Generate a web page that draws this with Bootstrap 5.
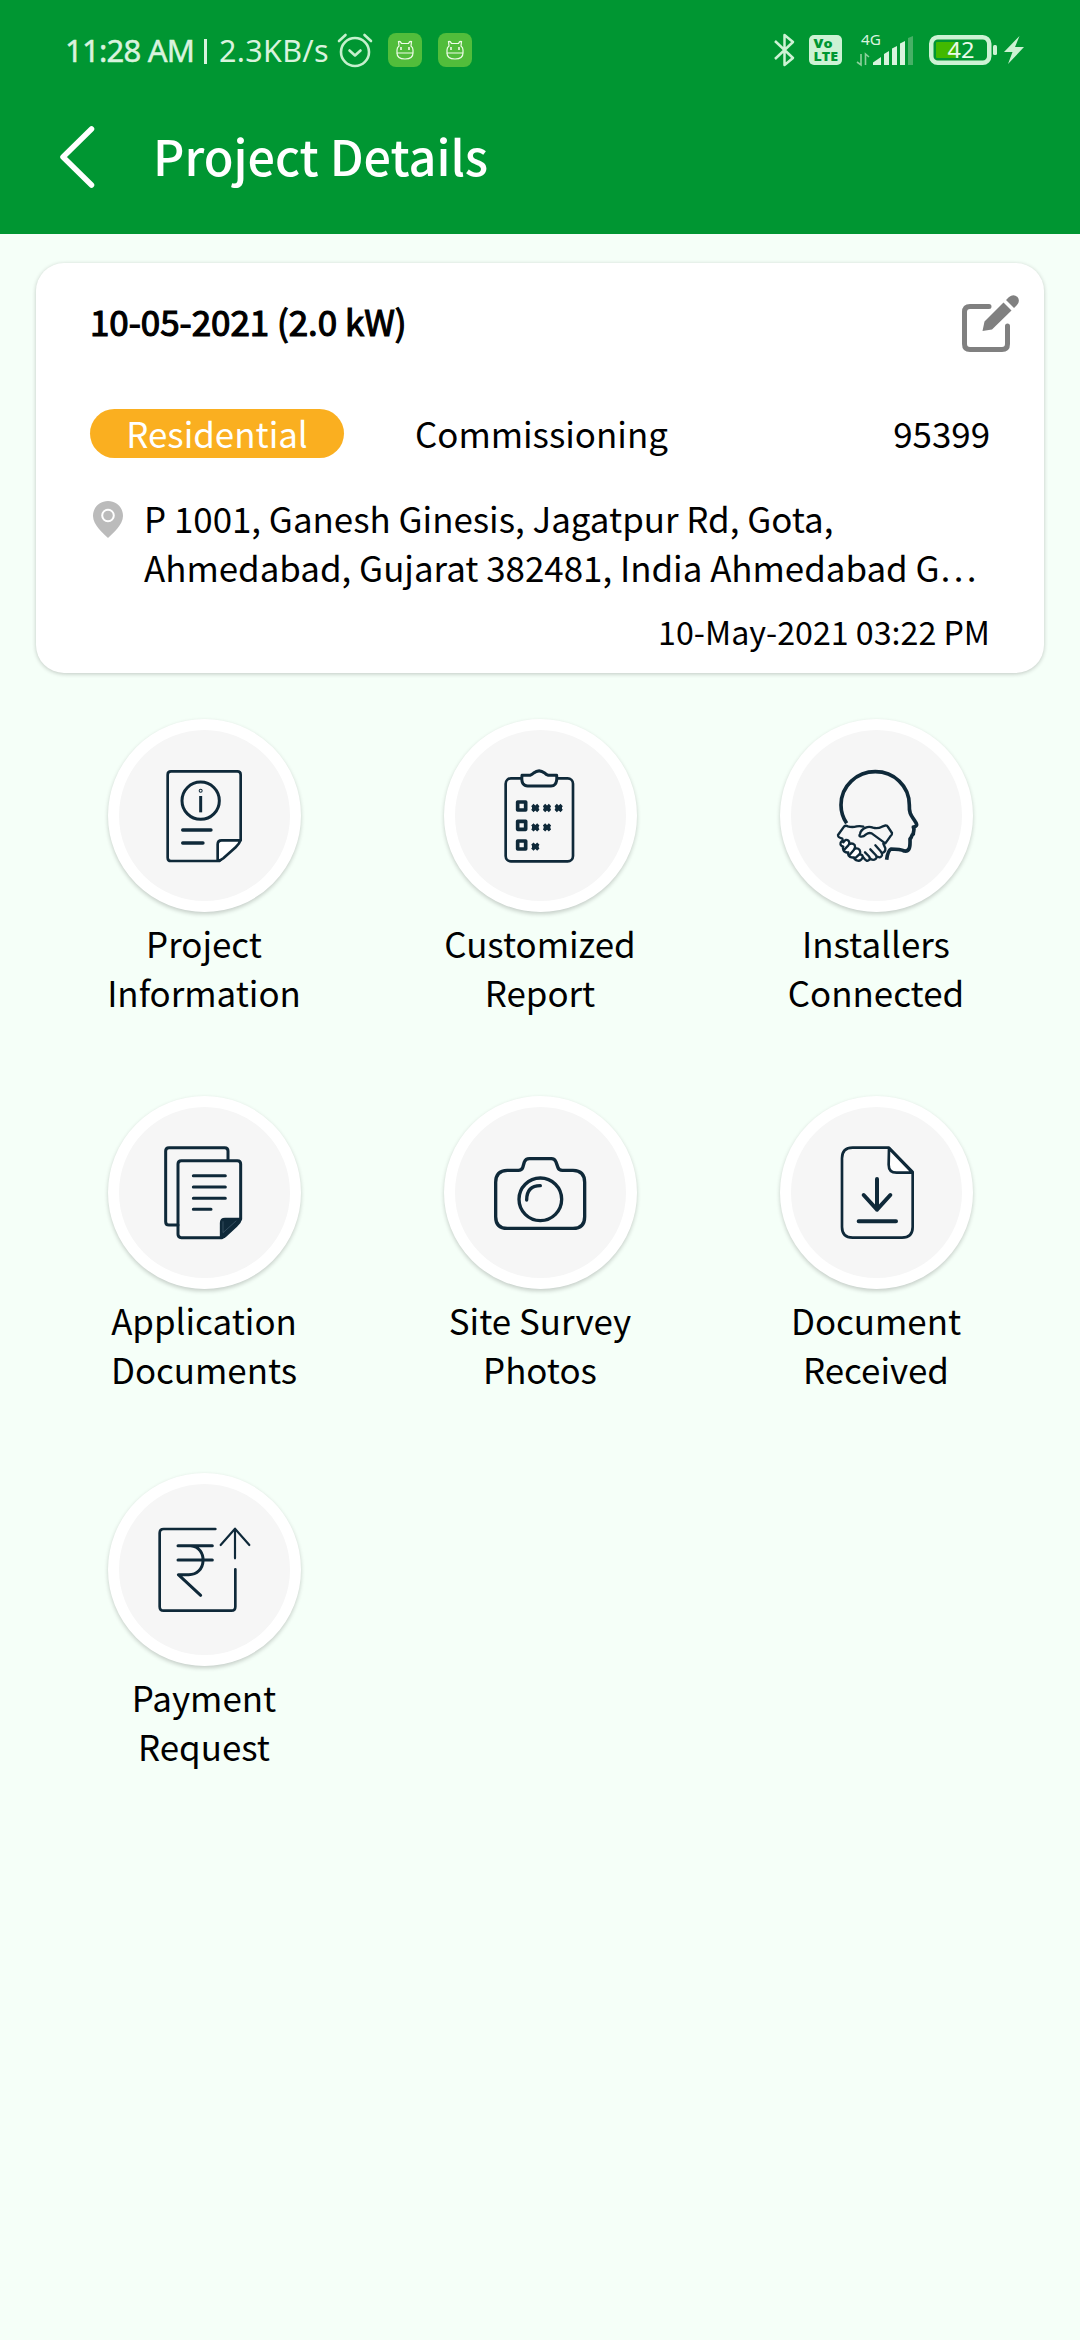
<!DOCTYPE html>
<html lang="en">
<head>
<meta charset="utf-8">
<meta name="viewport" content="width=device-width, initial-scale=1">
<title>Project Details</title>
<link href="https://cdn.jsdelivr.net/npm/bootstrap@5.3.0/dist/css/bootstrap.min.css" rel="stylesheet">
<style>
  body { background: #f5fff8; color: #000; font-family: "Noto Sans CJK SC", "Noto Sans", sans-serif; font-size: 34.9px; line-height: 49px; min-height: 2340px; }
  svg { display: block; flex: none; overflow: visible; }
  .topbar { background: #009632; height: 234px; color: #fff; }
  .statusbar { height: 100px; padding: 0 56px 0 65px; font-family: "Noto Sans", sans-serif; color: #d9f3de; line-height: 40px; }
  .clock { font-size: 31px; width: 132px; letter-spacing: -.75px; -webkit-text-stroke: .5px #d9f3de; }
  .speed { font-size: 30.5px; width: 115px; letter-spacing: .3px; }
  .divider { width: 3px; height: 25px; background: #d9f3de; margin: 3px 12px 0 7px; }
  .appbar { height: 114px; padding-left: 60px; gap: 59px; }
  .appbar h1 { font-size: 48.5px; line-height: 60px; font-weight: 500; margin: -4px 0 0; }
  .project { margin: 29px 36px 0; height: 410px; border: 0; border-radius: 28px; box-shadow: 0 1px 4px rgba(0,0,0,.22); color: #000; padding: 25px 25px 0 54px; }
  .project-name { font-weight: 400; font-size: 34.9px; line-height: 49px; margin: 9px 0 0 0; -webkit-text-stroke: 1.2px #000; }
  .kind { width: 254px; height: 49px; line-height: 49px; padding: 0; background: #faaf20; font-size: inherit; font-weight: 400; margin-right: 71px; }
  .status-row { margin: 57px 29px 0 0; line-height: 49px; }
  .address-row { margin: 36px 29px 0 3px; gap: 21px; }
  .stamp { font-size: 32.2px; margin: 15px 29px 0 0; }
  .tiles { margin: 46px 36px 0; row-gap: 79px; }
  .tile-disc { width: 193px; height: 193px; border: 11px solid #fff; background: #f6f6f6; box-shadow: 0 2px 4px rgba(0,0,0,.2); margin-bottom: 7px; }
  .tile-disc svg { width: 171px; height: 171px; fill: none; stroke: #0f2939; stroke-width: 9; stroke-linecap: round; stroke-linejoin: round; }
</style>
</head>
<body>
<header class="topbar">
  <div class="statusbar d-flex align-items-center">
    <span class="clock text-nowrap">11:28 AM</span><span class="divider"></span><span class="speed text-nowrap">2.3KB/s</span>
    <svg style="margin-left:3px" width="36" height="36" viewBox="0 0 36 36" fill="none" stroke="#c5f0cd" stroke-width="2.6" stroke-linecap="round" stroke-linejoin="round"><circle cx="18" cy="20" r="14"/><path d="M12.500 18.500 18 23.500 23.500 18.500M2 9 8.500 3M34 9 27.500 3"/></svg>
    <svg style="margin-left:15px" width="34" height="34" viewBox="0 0 34 34"><use href="#cat"/></svg>
    <svg style="margin-left:16px" width="34" height="34" viewBox="0 0 34 34">
      <g id="cat"><rect width="34" height="34" rx="8" fill="#51bd3b"/><g fill="none" stroke="#effbe9" stroke-width="1.200"><path d="M9 21V17Q9 14.500 11 13L10.500 8.500Q12.500 8 13.500 10.500H20.500Q21.500 8 23.500 8.500L23 13Q25 14.500 25 17V20Q25 26 17 26 9 26 9 20H25"/></g><path d="M13 14v3M21 14v3" stroke="#effbe9" stroke-width="1.600"/></g>
    </svg>
    <svg class="ms-auto" width="21" height="36" viewBox="0 0 21 36" fill="none" stroke="#cdf2d4" stroke-width="2.500" stroke-linejoin="round"><path d="M1 9 19 26 10.500 33V3L19 10 1 27"/></svg>
    <svg style="margin-left:14px" width="33" height="30" viewBox="0 0 33 30"><rect width="33" height="30" rx="5" fill="#cdf2d4"/><g fill="#009632" font-family="Open Sans" font-weight="800" font-size="12.500"><text x="4.500" y="12.500" textLength="19" lengthAdjust="spacingAndGlyphs">Vo</text><text x="4.500" y="25.500" textLength="24.500" lengthAdjust="spacingAndGlyphs">LTE</text></g></svg>
    <svg style="margin-left:15px" width="56" height="34" viewBox="0 0 56 34"><text x="4" y="12" font-family="Noto Sans" font-size="14.500" textLength="20" lengthAdjust="spacingAndGlyphs" fill="#d9f3de">4G</text><path d="M0 29 4 32V21M12 24 8.500 21V32" stroke="#8cd09c" stroke-width="1.600" fill="none"/><g fill="#d9f3de"><path d="M16 32V29.500L24 24V32ZM27 32V21L32 18V32ZM35 32V15.500L40 13V32ZM43 32V10.500L48 8V32Z"/><path d="M51 32V5L56 3V32Z" fill="#47b066"/></g></svg>
    <svg style="margin-left:16px" width="69" height="30" viewBox="0 0 69 30"><rect x="2.250" y="2.250" width="58" height="25.500" rx="6.500" fill="none" stroke="#cdf2d4" stroke-width="4.500"/><rect x="7" y="7" width="21" height="16" rx="1" fill="#42b900"/><rect x="64" y="10" width="4" height="10" rx="1.500" fill="#cdf2d4"/><text x="18.500" y="22.500" font-family="Noto Sans" font-size="21" textLength="27" lengthAdjust="spacingAndGlyphs" fill="#eafbea">42</text></svg>
    <svg style="margin-left:6px" width="20" height="30" viewBox="0 0 20 30"><path d="M15.500 1 0 17H8.500L4 29 20 12H11Z" fill="#cdf2d4"/></svg>
  </div>
  <div class="appbar d-flex align-items-center">
    <svg width="34" height="62" viewBox="0 0 34 62" fill="none" stroke="#fff" stroke-width="5.500" stroke-linecap="round" stroke-linejoin="round"><path d="M31.500 3 3 31 31.500 59"/></svg>
    <h1>Project Details</h1>
  </div>
</header>
<main>
  <section class="card project">
    <div class="d-flex justify-content-between align-items-start">
      <h2 class="project-name">10-05-2021 (2.0 kW)</h2>
      <svg style="margin-top:7px" width="57" height="57" viewBox="0 0 57 57"><path d="M27 11.500H8Q2.500 11.500 2.500 17V49Q2.500 54.500 8 54.500H40Q45.500 54.500 45.500 49V31" fill="none" stroke="#808080" stroke-width="5" stroke-linecap="round"/><path d="M20.500 36 22.500 26.500 41.500 7.500 49.500 15.500 30 34.500ZM44 5 47 2Q51.500-1.500 55.500 2 58.500 6 55 10L52 13Z" fill="#808080"/></svg>
    </div>
    <div class="status-row d-flex align-items-center">
      <span class="badge rounded-pill kind">Residential</span><span>Commissioning</span><span class="ms-auto">95399</span>
    </div>
    <div class="address-row d-flex align-items-start">
      <svg style="margin-top:7px" width="30" height="37" viewBox="0 0 30 37"><path d="M15 0C6.500 0 0 6.500 0 15 0 24 10 32 15 37 20 32 30 24 30 15 30 6.500 23.500 0 15 0Z" fill="#bbb"/><circle cx="15" cy="14.500" r="5.800" fill="none" stroke="#fff" stroke-width="2"/></svg>
      <div class="text-nowrap">P 1001, Ganesh Ginesis, Jagatpur Rd, Gota,<br>Ahmedabad, Gujarat 382481, India Ahmedabad G…</div>
    </div>
    <div class="stamp text-end">10-May-2021 03:22 PM</div>
  </section>

  <section class="row g-0 tiles text-center">
    <div class="col-4 d-flex flex-column align-items-center">
      <div class="tile-disc rounded-circle"><svg viewBox="85 61 513 513"><path d="M241 185H440Q450 185 450 195V392L386 454H241Q231 454 231 444V195Q231 185 241 185Z" stroke-width="8"/><path d="M381 453V404Q381 392 393 392H449Q447 402 435 413L398 446Q388 454 381 453Z" fill="#fff" stroke-width="8"/><circle cx="330" cy="273" r="56"/><path d="M330 259V308" stroke-linecap="butt"/><circle cx="330" cy="243" r="1.500"/><path d="M276 361H361M276 400H337" stroke-width="10"/></svg></div>
      <div>Project<br>Information</div>
    </div>
    <div class="col-4 d-flex flex-column align-items-center">
      <div class="tile-disc rounded-circle"><svg viewBox="73 61 513 513"><rect x="225" y="206" width="202" height="249" rx="16" stroke-width="8"/><path d="M274 197H298Q305 194 309 190 325 177 342 190 346 195 353 197H378Q380 216 373 224 369 229 361 229H291Q282 229 277 222 272 214 274 197Z" fill="#f6f6f6"/><g stroke-width="11"><rect x="261" y="277" width="24" height="24"/><rect x="261" y="335" width="24" height="24"/><rect x="261" y="394" width="24" height="24"/></g><path stroke-width="10" stroke-linecap="butt" d="M305 286 323 304M323 286 305 304M340 286 358 304M358 286 340 304M375 286 393 304M393 286 375 304M305 344 323 362M323 344 305 362M340 344 358 362M358 344 340 362M305 402 323 420M323 402 305 420"/><path stroke="none" fill="#0f2939" d="M304 289h20v13h-20zM339 289h20v13h-20zM374 289h20v13h-20zM304 347h20v13h-20zM339 347h20v13h-20zM304 405h20v13h-20z"/></svg></div>
      <div>Customized<br>Report</div>
    </div>
    <div class="col-4 d-flex flex-column align-items-center">
      <div class="tile-disc rounded-circle"><svg viewBox="90 61 513 513"><path stroke-width="11" stroke-linecap="butt" d="M257 341C244 322 240 306 240 286 240 228 288 186 343 186 398 186 445 228 445 286 444 315 452 318 464 338 470 347 466 351 457 352 462 361 456 366 457 373 450 376 454 382 447 388 448 412 446 426 430 424 418 418 402 418 390 418 380 424 379 436 377 450"/>
      <g stroke-width="7"><path d="M246 395 244 387Q230 383 231 376L249 351Q254 346 260 350 274 354 287 350 298 348 307 351"/><path d="M297 373Q299 361 314 354 324 349 336 354 350 358 363 351L374 347Q379 347 381 352L393 370Q394 376 388 380L373 401 332 371Q323 368 315 374 306 383 297 380Q294 378 297 373Z"/><path d="M247 398Q255 386 262 393 267 398 264 404 274 398 281 406 284 412 280 418 290 413 296 421 300 428 296 434 306 434 305 443 300 455 290 453 280 451 279 443 267 445 263 438 260 432 262 428 251 430 247 421 244 415 247 411 236 408 239 399 244 390 247 398Z" fill="#fff"/><path d="M262 407 249 421M279 420 265 437M295 434 281 447M307 443Q317 459 325 450 329 446 323 439L312 428M326 445Q335 455 345 447 349 443 344 436L328 419M346 440Q359 447 363 437 365 431 359 425L343 407M362 430Q374 428 373 416L367 402"/></g></svg></div>
      <div>Installers<br>Connected</div>
    </div>
    <div class="col-4 d-flex flex-column align-items-center">
      <div class="tile-disc rounded-circle"><svg viewBox="85 68 513 513"><path d="M262 422H235Q225 422 225 412V200Q225 190 235 190H402Q412 190 412 200V228"/><path d="M272 229H440Q450 229 450 239V404L394 460H272Q262 460 262 450V239Q262 229 272 229Z"/><path d="M392 459V416Q392 405 403 405H449Q447 415 437 423L407 451Q400 459 392 459Z" fill="#0f2939"/><path d="M308 274H404M308 308H404M308 342H404M308 375H361"/><path d="M397 412V445L436 410" stroke="#597083" stroke-width="1.500"/></svg></div>
      <div>Application<br>Documents</div>
    </div>
    <div class="col-4 d-flex flex-column align-items-center">
      <div class="tile-disc rounded-circle"><svg viewBox="73 68 513 513"><path stroke-width="10" d="M230 258H263Q273 258 276 250L281 233Q285 223 296 223H362Q372 223 376 233L382 250Q385 258 395 258H427Q462 259 462 294V397Q462 432 427 432H230Q195 432 195 397V294Q195 259 230 258Z"/><circle cx="329" cy="345" r="64" stroke-width="10"/><path d="M288 347Q288 304 329 304" stroke-width="10"/></svg></div>
      <div>Site Survey<br>Photos</div>
    </div>
    <div class="col-4 d-flex flex-column align-items-center">
      <div class="tile-disc rounded-circle"><svg viewBox="90 68 513 513"><path stroke-width="8" d="M275 190H384L455 263V428Q455 460 423 460H275Q243 460 243 428V222Q243 190 275 190Z"/><path stroke-width="8" fill="#fff" d="M384 192 454 265H407Q383 265 383 241Z"/><path stroke-width="12" d="M348 284V376M308 332 348 376 388 332M293 411H405"/></svg></div>
      <div>Document<br>Received</div>
    </div>
    <div class="col-4 d-flex flex-column align-items-center">
      <div class="tile-disc rounded-circle"><svg viewBox="85 75 513 513"><path stroke-width="8" d="M374 210H219Q207 210 207 222V443Q207 455 219 455H422Q434 455 434 443V331"/><path stroke-width="6.500" d="M433 298V210M390 258 433 209 476 258"/><path stroke-width="9" d="M262 260H365M262 303H365M300 260C352 264 350 350 291 347H263L330 409"/></svg></div>
      <div>Payment<br>Request</div>
    </div>
  </section>
</main>
<script src="https://cdn.jsdelivr.net/npm/bootstrap@5.3.0/dist/js/bootstrap.bundle.min.js"></script>
</body>
</html>
